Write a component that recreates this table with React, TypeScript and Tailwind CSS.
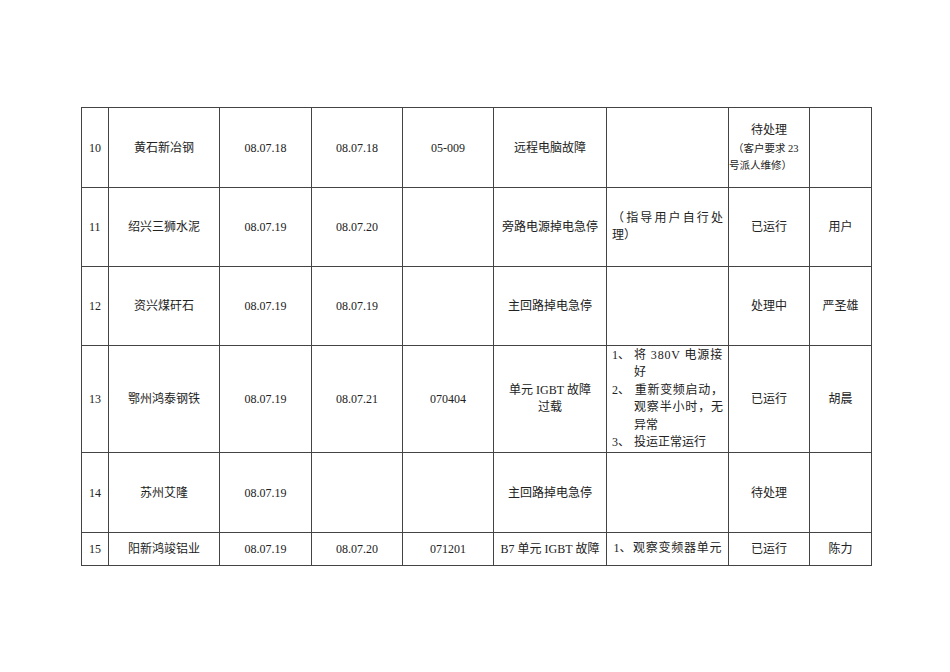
import React from "react";

const font = { fontFamily: '"Liberation Serif", "Noto Sans CJK SC", serif' };

type Row = {
  h: string;
  no: string;
  name: string;
  d1: string;
  d2: string;
  code: string;
  fault: React.ReactNode;
  proc: React.ReactNode;
  status: React.ReactNode;
  person: string;
};

const cell = "border-r border-b border-[#444] flex items-center justify-center text-center";
const just = "text-justify [text-justify:inter-character]";

function Proc13() {
  const item = `pl-[22px] -indent-[22px] ${just}`;
  return (
    <div className="w-full px-[5px] text-[12px] leading-[17.5px]">
      <div className={item}>
        <span className="inline-block w-[22px] indent-0">1、</span>
        <span className="tracking-[0.8px]">将 380V 电源接好</span>
      </div>
      <div className={item}>
        <span className="inline-block w-[22px] indent-0">2、</span>重新变频启动，观察半小时，无异常
      </div>
      <div className={item}>
        <span className="inline-block w-[22px] indent-0">3、</span>投运正常运行
      </div>
    </div>
  );
}

const rows: Row[] = [
  {
    h: "h-[80px]",
    no: "10",
    name: "黄石新冶钢",
    d1: "08.07.18",
    d2: "08.07.18",
    code: "05-009",
    fault: "远程电脑故障",
    proc: null,
    status: (
      <div className="w-full pt-[2px]">
        <div className="text-center text-[12px] leading-[17.5px]">待处理</div>
        <div className="text-left text-[10.5px] leading-[17.5px] pl-[4px]">（客户要求 23</div>
        <div className="text-left text-[10.5px] leading-[17.5px] pl-0">号派人维修）</div>
      </div>
    ),
    person: "",
  },
  {
    h: "h-[79px]",
    no: "11",
    name: "绍兴三狮水泥",
    d1: "08.07.19",
    d2: "08.07.20",
    code: "",
    fault: "旁路电源掉电急停",
    proc: (
      <div className={`w-full px-[5px] text-[12px] leading-[17.5px] ${just}`}>
        （指导用户自行处理）
      </div>
    ),
    status: "已运行",
    person: "用户",
  },
  {
    h: "h-[79px]",
    no: "12",
    name: "资兴煤矸石",
    d1: "08.07.19",
    d2: "08.07.19",
    code: "",
    fault: "主回路掉电急停",
    proc: null,
    status: "处理中",
    person: "严圣雄",
  },
  {
    h: "h-[107px]",
    no: "13",
    name: "鄂州鸿泰钢铁",
    d1: "08.07.19",
    d2: "08.07.21",
    code: "070404",
    fault: (
      <span className="leading-[17.5px]">
        单元 IGBT 故障
        <br />
        过载
      </span>
    ),
    proc: <Proc13 />,
    status: "已运行",
    person: "胡晨",
  },
  {
    h: "h-[80px]",
    no: "14",
    name: "苏州艾隆",
    d1: "08.07.19",
    d2: "",
    code: "",
    fault: "主回路掉电急停",
    proc: null,
    status: "待处理",
    person: "",
  },
  {
    h: "h-[33px]",
    no: "15",
    name: "阳新鸿竣铝业",
    d1: "08.07.19",
    d2: "08.07.20",
    code: "071201",
    fault: <span className="whitespace-nowrap">B7 单元 IGBT 故障</span>,
    proc: (
      <div className="w-full px-[5px] text-[12px] leading-[17.5px] flex whitespace-nowrap">
        <span className="inline-block w-[21px] shrink-0">1、</span>
        <span className="tracking-[0.75px]">观察变频器单元</span>
      </div>
    ),
    status: "已运行",
    person: "陈力",
  },
];

export default function App() {
  return (
    <div lang="zh-CN" className="min-h-[672px] w-[950px] bg-white pt-[107px] pl-[81px] text-[#222]" style={font}>
      <div className="inline-block border-l border-t border-[#444] text-[12px]">
        {rows.map((r) => (
          <div key={r.no} className={`flex ${r.h}`}>
            <div className="w-[27px] border-r border-b border-[#444] flex items-center pl-[7px]">{r.no}</div>
            <div className={`w-[111px] ${cell}`}>{r.name}</div>
            <div className={`w-[92px] ${cell}`}>{r.d1}</div>
            <div className={`w-[91px] ${cell}`}>{r.d2}</div>
            <div className={`w-[91px] ${cell}`}>{r.code}</div>
            <div className={`w-[113px] ${cell}`}>{r.fault}</div>
            <div className={`w-[122px] ${cell}`}>{r.proc}</div>
            <div className={`w-[81px] ${cell}`}>{r.status}</div>
            <div className={`w-[62px] ${cell}`}>{r.person}</div>
          </div>
        ))}
      </div>
    </div>
  );
}
